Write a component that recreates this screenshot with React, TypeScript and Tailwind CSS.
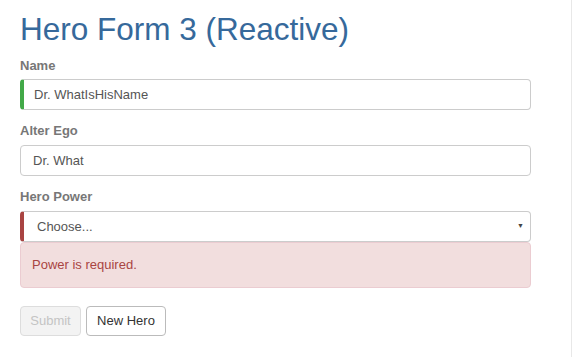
export default function App() {
  return (
    <div className="w-[572px] h-[357px] bg-white flex" style={{ fontFamily: '"Liberation Sans", Arial, sans-serif' }}>
      <div className="w-[571px] pl-[20px] pr-[40px] pt-[9px]">
        <h1 className="text-[31.5px] leading-[40px] text-[#36699b] mb-[9px]">Hero Form 3 (Reactive)</h1>

        <label className="block text-[13px] font-bold text-[#777] leading-[16px] mb-[5px]">Name</label>
        <div className="h-[31px] border border-[#ccc] border-l-[4px] border-l-[#42a948] rounded-[4px] flex items-center pl-[10px] text-[13px] text-[#555] mb-[13px]">
          Dr. WhatIsHisName
        </div>

        <label className="block text-[13px] font-bold text-[#777] leading-[16px] mb-[6px]">Alter Ego</label>
        <div className="h-[31px] border border-[#ccc] rounded-[4px] flex items-center pl-[12px] text-[13px] text-[#555] mb-[13px]">
          Dr. What
        </div>

        <label className="block text-[13px] font-bold text-[#777] leading-[16px] mb-[6px]">Hero Power</label>
        <div className="h-[31px] border border-[#ccc] border-l-[4px] border-l-[#a94442] rounded-[4px] flex items-center pl-[13px] pr-[6px] text-[13px] text-[#555]">
          <span className="flex-1">Choose...</span>
          <span className="text-[7px] text-[#444]">▼</span>
        </div>
        <div className="h-[46px] bg-[#f2dede] border border-[#ebccd1] rounded-[4px] flex items-center pl-[11px] text-[13px] text-[#a94442]">
          Power is required.
        </div>

        <div className="flex gap-[5px] mt-[18px]">
          <button className="h-[30px] w-[61px] border border-[#ddd] bg-[#f3f3f3] rounded-[4px] text-[13px] text-[#c4c4c4]">Submit</button>
          <button className="h-[30px] w-[80px] border border-[#bbb] bg-white rounded-[4px] text-[13px] text-[#333]">New Hero</button>
        </div>
      </div>
      <div className="w-[1px] h-full bg-[#e8e8e8]" />
    </div>
  );
}
